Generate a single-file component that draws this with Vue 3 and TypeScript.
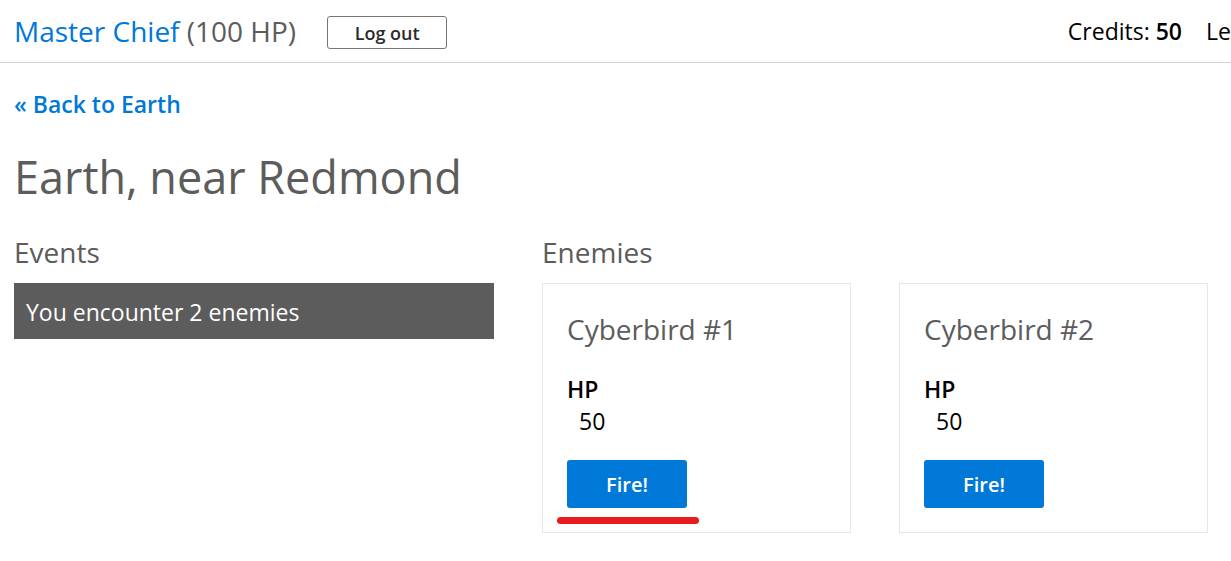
<script setup lang="ts">
interface Enemy {
  name: string
  hp: number
  highlighted: boolean
}

const player = { name: 'Master Chief', hp: 100, credits: 50 }
const place = 'Earth'
const events: string[] = ['You encounter 2 enemies']
const enemies: Enemy[] = [
  { name: 'Cyberbird #1', hp: 50, highlighted: true },
  { name: 'Cyberbird #2', hp: 50, highlighted: false },
]
</script>

<template>
  <div class="page">
    <header class="topbar">
      <div class="player"><a href="#">{{ player.name }}</a> ({{ player.hp }} HP)</div>
      <button class="logout" type="button">Log out</button>
      <div class="stats">
        <span>Credits: <strong>{{ player.credits }}</strong></span>
        <span class="level">Level</span>
      </div>
    </header>
    <main class="content">
      <a class="back" href="#">« Back to {{ place }}</a>
      <h1>{{ place }}, near Redmond</h1>
      <div class="columns">
        <section class="events">
          <h2>Events</h2>
          <ul>
            <li v-for="event in events" :key="event">{{ event }}</li>
          </ul>
        </section>
        <section class="enemies">
          <h2>Enemies</h2>
          <div class="cards">
            <article v-for="enemy in enemies" :key="enemy.name" class="card">
              <h3>{{ enemy.name }}</h3>
              <dl>
                <dt>HP</dt>
                <dd>{{ enemy.hp }}</dd>
              </dl>
              <div class="action">
                <button class="fire" type="button">Fire!</button>
                <span v-if="enemy.highlighted" class="marker"></span>
              </div>
            </article>
          </div>
        </section>
      </div>
    </main>
  </div>
</template>

<style>
body {
  margin: 0;
  background: #fff;
}
</style>

<style scoped>
.page {
  font-family: "Segoe UI", "Open Sans", "Noto Sans", sans-serif;
  font-size: 23px;
  line-height: 32px;
  color: #000;
}
.topbar {
  display: flex;
  align-items: center;
  box-sizing: border-box;
  min-height: 63px;
  padding-left: 14px;
  border-bottom: 1px solid #d2d2d2;
  white-space: nowrap;
  overflow: hidden;
}
.player {
  font-size: 28px;
  color: #5c5c5c;
}
a {
  color: #0078d7;
  text-decoration: none;
}
button {
  font-family: inherit;
  font-weight: 600;
  border-radius: 3px;
  padding: 2px 0 0;
  width: 120px;
}
.logout {
  height: 33px;
  margin: 2px 0 0 31px;
  border: 1px solid #767676;
  background: #fff;
  color: #2b2b2b;
  font-size: 18px;
  line-height: 28px;
}
.stats {
  display: flex;
  gap: 24px;
  margin-left: auto;
}
strong {
  font-weight: 600;
}
.level {
  width: 25px;
  overflow: hidden;
}
.content {
  padding: 25px 23px 28px 14px;
}
.back {
  display: block;
  width: fit-content;
  font-weight: 600;
}
h1,
h2,
h3 {
  margin: 0;
  color: #5c5c5c;
  font-weight: 400;
}
h1 {
  margin-top: 24px;
  font-size: 45px;
  line-height: 66px;
}
.columns {
  display: flex;
  gap: 48px;
  margin-top: 24px;
}
h2,
h3 {
  font-size: 28px;
  line-height: 36px;
}
h2 {
  margin-bottom: 13px;
}
.events {
  flex: 0 0 480px;
}
ul {
  margin: 0;
  padding: 0;
  list-style: none;
}
li {
  padding: 13px 12px 11px;
  background: #5c5c5c;
  color: #fff;
}
.enemies {
  flex: 1;
}
.cards {
  display: grid;
  grid-template-columns: 1fr 1fr;
  gap: 48px;
}
.card {
  padding: 27px 24px 24px;
  border: 1px solid #e6e6e6;
}
dl {
  margin: 26px 0 23px;
}
dt {
  font-weight: 600;
}
dd {
  margin: 0 0 0 12px;
}
.action {
  position: relative;
  width: fit-content;
}
.fire {
  display: block;
  height: 48px;
  border: 0;
  background: #0078d7;
  color: #fff;
  font-size: 20px;
  line-height: 28px;
}
.marker {
  position: absolute;
  left: -10px;
  right: -12px;
  top: 57px;
  height: 7px;
  border-radius: 4px;
  background: #e81c1c;
}
</style>
